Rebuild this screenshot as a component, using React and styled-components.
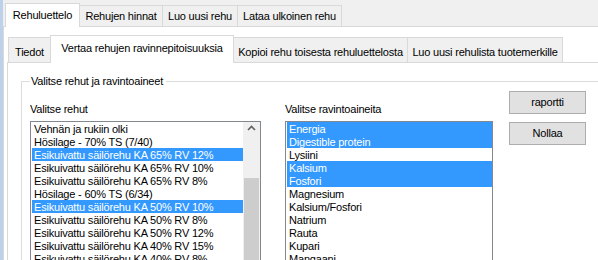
import React from "react";
import styled, { createGlobalStyle, css } from "styled-components";

const Global = createGlobalStyle`
  *, *::before, *::after { box-sizing: border-box; }
  html, body { margin: 0; padding: 0; background: #f0f0f0; }
  body {
    font-family: "Liberation Sans", Arial, sans-serif;
    font-size: 11px;
    letter-spacing: -0.2px;
    color: #000;
  }
`;

const Window = styled.div`
  display: flex;
  width: 598px;
  height: 260px;
  overflow: hidden;
  background: #f0f0f0;
`;

const EdgeStrip = styled.div`
  flex: 0 0 3px;
  background: #bdd2ea;
`;

const Main = styled.div`
  flex: 1;
  padding-top: 3px;
  min-width: 0;
`;

const TabRow = styled.div`
  display: flex;
  align-items: flex-end;
  height: ${(p) => p.$height}px;
  padding-left: ${(p) => p.$indent}px;
`;

const Tab = styled.div`
  flex: 0 0 ${(p) => p.$width}px;
  position: relative;
  border: 1px solid #d9d9d9;
  border-bottom: none;
  background: #f0f0f0;
  text-align: center;
  line-height: 13px;
  white-space: nowrap;
  height: ${(p) => p.$height}px;
  padding-top: ${(p) => p.$pad}px;
  & + & { margin-left: -1px; }
  ${(p) =>
    p.$active &&
    css`
      background: #fff;
      z-index: 1;
      margin-bottom: -1px;
    `}
`;

const Page = styled.div`
  width: 640px;
  height: 400px;
  border: 1px solid #d9d9d9;
  background: #fff;
  padding: ${(p) => p.$pad};
`;

const GroupBox = styled.div`
  position: relative;
  margin: 18px 0 0 13px;
  width: 620px;
  height: 300px;
  border: 1px solid #dcdcdc;
  padding: 9px 0 0 8px;
  display: flex;
  align-items: flex-start;
`;

const Legend = styled.span`
  position: absolute;
  top: -7px;
  left: 8px;
  padding: 0 3px 0 1px;
  background: #fff;
  line-height: 13px;
  white-space: nowrap;
`;

const Column = styled.div`
  flex: 0 0 ${(p) => p.$width}px;
  margin-left: ${(p) => p.$gap || 0}px;
  margin-top: 12px;
  display: flex;
  flex-direction: column;
`;

const Label = styled.div`
  line-height: 13px;
  height: 13px;
  margin-bottom: 5px;
  white-space: nowrap;
`;

const ListBox = styled.div`
  display: flex;
  height: 160px;
  border: 1px solid #828790;
  background: #fff;
  overflow: hidden;
`;

const Items = styled.div`
  flex: 1;
  padding-left: 1px;
  min-width: 0;
`;

const Item = styled.div`
  height: 13px;
  padding: 1px 0 0 2px;
  line-height: 13px;
  white-space: nowrap;
  overflow: hidden;
  background: ${(p) => (p.$selected ? "#3399ff" : "transparent")};
  color: ${(p) => (p.$selected ? "#fff" : "#000")};
`;

const ScrollBar = styled.div`
  flex: 0 0 17px;
  display: flex;
  flex-direction: column;
  background: #f0f0f0;
`;

const ScrollButton = styled.div`
  height: 17px;
  display: flex;
  align-items: center;
  justify-content: center;
  padding-top: 3px;
`;

const Track = styled.div`
  flex: 1;
  padding: 0 1px;
`;

const Thumb = styled.div`
  margin-top: ${(p) => p.$offset}px;
  height: 200px;
  background: #cdcdcd;
`;

const ButtonColumn = styled.div`
  flex: 0 0 77px;
  margin-left: 16px;
  display: flex;
  flex-direction: column;
  gap: 8px;
`;

const Button = styled.div`
  height: 23px;
  border: 1px solid #adadad;
  background: #e1e1e1;
  display: flex;
  align-items: center;
  justify-content: center;
  line-height: 13px;
`;

const feeds = [
  ["Vehnän ja rukiin olki", false],
  ["Hösilage - 70% TS (7/40)", false],
  ["Esikuivattu säilörehu KA 65% RV 12%", true],
  ["Esikuivattu säilörehu KA 65% RV 10%", false],
  ["Esikuivattu säilörehu KA 65% RV 8%", false],
  ["Hösilage - 60% TS (6/34)", false],
  ["Esikuivattu säilörehu KA 50% RV 10%", true],
  ["Esikuivattu säilörehu KA 50% RV 8%", false],
  ["Esikuivattu säilörehu KA 50% RV 12%", false],
  ["Esikuivattu säilörehu KA 40% RV 15%", false],
  ["Esikuivattu säilörehu KA 40% RV 8%", false],
  ["Esikuivattu säilörehu KA 40% RV 12%", false],
];

const nutrients = [
  ["Energia", true],
  ["Digestible protein", true],
  ["Lysiini", false],
  ["Kalsium", true],
  ["Fosfori", true],
  ["Magnesium", false],
  ["Kalsium/Fosfori", false],
  ["Natrium", false],
  ["Rauta", false],
  ["Kupari", false],
  ["Mangaani", false],
  ["Sinkki", false],
];

const outerTabs = [
  ["Rehuluettelo", 75, true],
  ["Rehujen hinnat", 84, false],
  ["Luo uusi rehu", 76, false],
  ["Lataa ulkoinen rehu", 105, false],
];

const innerTabs = [
  ["Tiedot", 43, false],
  ["Vertaa rehujen ravinnepitoisuuksia", 184, true],
  ["Kopioi rehu toisesta rehuluettelosta", 175, false],
  ["Luo uusi rehulista tuotemerkille", 156, false],
];

const UpArrow = () => (
  <svg width="9" height="6" viewBox="0 0 9 6">
    <polyline points="1,5 4.5,1.5 8,5" fill="none" stroke="#606060" strokeWidth="1.6" />
  </svg>
);

export default function App() {
  return (
    <>
      <Global />
      <Window>
        <EdgeStrip />
        <Main>
          <TabRow $height={23} $indent={2}>
            {outerTabs.map(([label, w, active]) => (
              <Tab key={label} $width={w} $active={active} $height={active ? 24 : 21} $pad={active ? 5 : 4}>
                {label}
              </Tab>
            ))}
          </TabRow>
          <Page $pad="8px 0 0 3px">
            <TabRow $height={27} $indent={1}>
              {innerTabs.map(([label, w, active]) => (
                <Tab key={label} $width={w} $active={active} $height={active ? 28 : 25} $pad={active ? 6 : 8}>
                  {label}
                </Tab>
              ))}
            </TabRow>
            <Page $pad="0">
              <GroupBox>
                <Legend>Valitse rehut ja ravintoaineet</Legend>
                <Column $width={231}>
                  <Label>Valitse rehut</Label>
                  <ListBox>
                    <Items>
                      {feeds.map(([t, s], i) => (
                        <Item key={i} $selected={s}>{t}</Item>
                      ))}
                    </Items>
                    <ScrollBar>
                      <ScrollButton>
                        <UpArrow />
                      </ScrollButton>
                      <Track>
                        <Thumb $offset={47} />
                      </Track>
                    </ScrollBar>
                  </ListBox>
                </Column>
                <Column $width={208} $gap={24}>
                  <Label>Valitse ravintoaineita</Label>
                  <ListBox>
                    <Items>
                      {nutrients.map(([t, s], i) => (
                        <Item key={i} $selected={s}>{t}</Item>
                      ))}
                    </Items>
                  </ListBox>
                </Column>
                <ButtonColumn>
                  <Button>raportti</Button>
                  <Button>Nollaa</Button>
                </ButtonColumn>
              </GroupBox>
            </Page>
          </Page>
        </Main>
      </Window>
    </>
  );
}
